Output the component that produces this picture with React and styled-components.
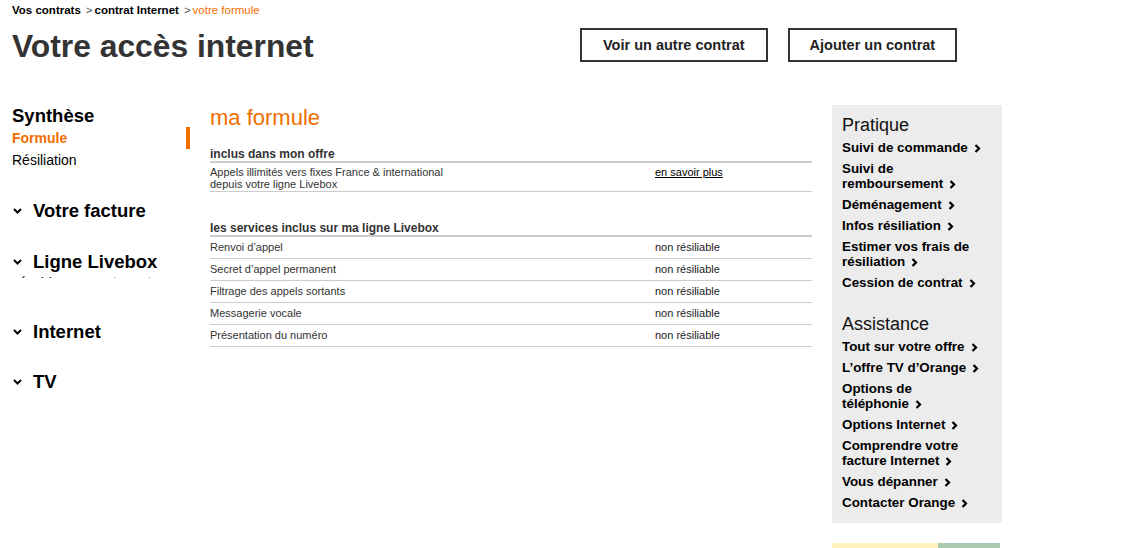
import React from 'react'
import styled, { createGlobalStyle } from 'styled-components'

const Global = createGlobalStyle`
  body {
    margin: 0;
    background: #fff;
    font-family: "Liberation Sans", Arial, sans-serif;
    color: #000;
  }
`

const Page = styled.div`
  padding: 4px 0 0 12px;
  width: 1000px;
`

const Crumbs = styled.div`
  font-size: 11.5px;
  line-height: 13px;
  height: 13px;
  display: flex;
  gap: 5px;
`

const Crumb = styled.span`
  font-weight: ${p => (p.current ? 'normal' : 'bold')};
  color: ${p => (p.current ? '#f16e00' : '#000')};
`

const Sep = styled.span`
  color: #555;
  font-weight: normal;
  margin-right: 2px;
`

const Header = styled.div`
  display: flex;
  align-items: flex-start;
  margin-top: 11px;
  height: 77px;
`

const Title = styled.h1`
  margin: 0;
  width: 568px;
  font-size: 31.8px;
  line-height: 36px;
  font-weight: bold;
  color: #333;
`

const Actions = styled.div`
  display: flex;
  gap: 20px;
`

const OutlineButton = styled.button`
  height: 34px;
  padding: 0 ${p => p.pad || 20}px;
  border: 2px solid #333;
  background: #fff;
  font-family: inherit;
  font-size: 14.5px;
  font-weight: bold;
  color: #222;
  cursor: pointer;
`

const Columns = styled.div`
  display: flex;
  gap: 20px;
  align-items: flex-start;
`

const Nav = styled.nav`
  width: 178px;
  flex: none;
`

const NavTitle = styled.div`
  font-size: 18.5px;
  line-height: 22px;
  font-weight: bold;
`

const NavLink = styled.div`
  font-size: 14px;
  line-height: 22px;
  font-weight: ${p => (p.active ? 'bold' : 'normal')};
  color: ${p => (p.active ? '#f16e00' : '#000')};
  border-right: 4px solid ${p => (p.active ? '#f16e00' : 'transparent')};
`

const Group = styled.div`
  margin-top: ${p => p.mt || 29}px;
`

const GroupHead = styled.div`
  display: flex;
  align-items: center;
  font-size: 18.5px;
  line-height: 22px;
  font-weight: bold;
  svg {
    margin: 0 11px 0 1px;
    flex: none;
  }
`

const Clipped = styled.div`
  margin: 0 0 43px 8px;
  height: 5px;
  overflow: hidden;
  font-size: 15px;
  line-height: 18px;
  letter-spacing: 6px;
  color: #222;
`

const Main = styled.main`
  width: 602px;
  flex: none;
`

const SectionTitle = styled.h2`
  margin: 0;
  font-size: 22px;
  line-height: 26px;
  font-weight: normal;
  color: #f16e00;
`

const Block = styled.div`
  margin-top: ${p => p.mt}px;
`

const BlockHead = styled.div`
  font-size: 12px;
  line-height: 14px;
  font-weight: bold;
  color: #333;
  border-bottom: 2px solid #ccc;
`

const Row = styled.div`
  display: flex;
  font-size: 11px;
  line-height: 12px;
  color: #333;
  padding: ${p => (p.tall ? '3px 0 1px' : '4px 0 5px')};
  border-bottom: 1px solid #ccc;
`

const Label = styled.div`
  width: 445px;
  flex: none;
`

const Value = styled.div`
  color: #222;
`

const More = styled.a`
  color: #000;
  text-decoration: underline;
`

const Side = styled.aside`
  width: 170px;
  flex: none;
`

const Panel = styled.div`
  background: #ececec;
  padding: 9px 6px 13px 10px;
`

const PanelTitle = styled.div`
  font-size: 18px;
  line-height: 22px;
  color: #111;
  margin-top: ${p => p.mt || 0}px;
`

const LinkList = styled.ul`
  list-style: none;
  margin: 4px 0 0;
  padding: 0;
  display: flex;
  flex-direction: column;
  gap: 6px;
`

const SideLink = styled.li`
  font-size: 13.4px;
  line-height: 15px;
  font-weight: bold;
  color: #000;
  svg {
    margin-left: 6px;
    vertical-align: -1px;
  }
`

const Strip = styled.div`
  margin-top: 20px;
  height: 5px;
  display: flex;
`

const StripPart = styled.div`
  height: 100%;
  width: ${p => p.w}px;
  background: ${p => p.bg};
`

const Down = () => (
  <svg width="9" height="6" viewBox="0 0 9 6">
    <polyline points="1,1 4.5,4.5 8,1" fill="none" stroke="#000" strokeWidth="2" />
  </svg>
)

const Right = () => (
  <svg width="7" height="9" viewBox="0 0 7 9">
    <polyline points="1.5,1 5,4.5 1.5,8" fill="none" stroke="#000" strokeWidth="2.2" />
  </svg>
)

const services = [
  'Renvoi d\u2019appel',
  'Secret d\u2019appel permanent',
  'Filtrage des appels sortants',
  'Messagerie vocale',
  'Présentation du numéro'
]

const pratique = [
  ['Suivi de commande'],
  ['Suivi de', 'remboursement'],
  ['Déménagement'],
  ['Infos résiliation'],
  ['Estimer vos frais de', 'résiliation'],
  ['Cession de contrat']
]

const assistance = [
  ['Tout sur votre offre'],
  ['L\u2019offre TV d\u2019Orange'],
  ['Options de', 'téléphonie'],
  ['Options Internet'],
  ['Comprendre votre', 'facture Internet'],
  ['Vous dépanner'],
  ['Contacter Orange']
]

const Links = ({ items }) => (
  <LinkList>
    {items.map(lines => (
      <SideLink key={lines.join(' ')}>
        {lines.map((l, i) => (
          <React.Fragment key={l}>
            {i > 0 && <br />}
            {l}
          </React.Fragment>
        ))}
        <Right />
      </SideLink>
    ))}
  </LinkList>
)

export default function App() {
  return (
    <Page>
      <Global />
      <Crumbs>
        <Crumb>Vos contrats</Crumb>
        <Crumb><Sep>&gt;</Sep>contrat Internet</Crumb>
        <Crumb current><Sep>&gt;</Sep>votre formule</Crumb>
      </Crumbs>

      <Header>
        <Title>Votre accès internet</Title>
        <Actions>
          <OutlineButton pad={21}>Voir un autre contrat</OutlineButton>
          <OutlineButton pad={20}>Ajouter un contrat</OutlineButton>
        </Actions>
      </Header>

      <Columns>
        <Nav>
          <NavTitle>Synthèse</NavTitle>
          <NavLink active>Formule</NavLink>
          <NavLink>Résiliation</NavLink>

          <Group>
            <GroupHead><Down />Votre facture</GroupHead>
          </Group>
          <Group>
            <GroupHead><Down />Ligne Livebox</GroupHead>
            <Clipped>( Voyant et fixe )</Clipped>
          </Group>
          <Group mt={28}>
            <GroupHead><Down />Internet</GroupHead>
          </Group>
          <Group mt={28}>
            <GroupHead><Down />TV</GroupHead>
          </Group>
        </Nav>

        <Main>
          <SectionTitle>ma formule</SectionTitle>

          <Block mt={16}>
            <BlockHead>inclus dans mon offre</BlockHead>
            <Row tall>
              <Label>
                Appels illimités vers fixes France &amp; international
                <br />
                depuis votre ligne Livebox
              </Label>
              <Value><More href="#">en savoir plus</More></Value>
            </Row>
          </Block>

          <Block mt={29}>
            <BlockHead>les services inclus sur ma ligne Livebox</BlockHead>
            {services.map(s => (
              <Row key={s}>
                <Label>{s}</Label>
                <Value>non résiliable</Value>
              </Row>
            ))}
          </Block>
        </Main>

        <Side>
          <Panel>
            <PanelTitle>Pratique</PanelTitle>
            <Links items={pratique} />
            <PanelTitle mt={23}>Assistance</PanelTitle>
            <Links items={assistance} />
          </Panel>
          <Strip>
            <StripPart w={106} bg="#fdf2bd" />
            <StripPart w={62} bg="#a9c9b0" />
          </Strip>
        </Side>
      </Columns>
    </Page>
  )
}
